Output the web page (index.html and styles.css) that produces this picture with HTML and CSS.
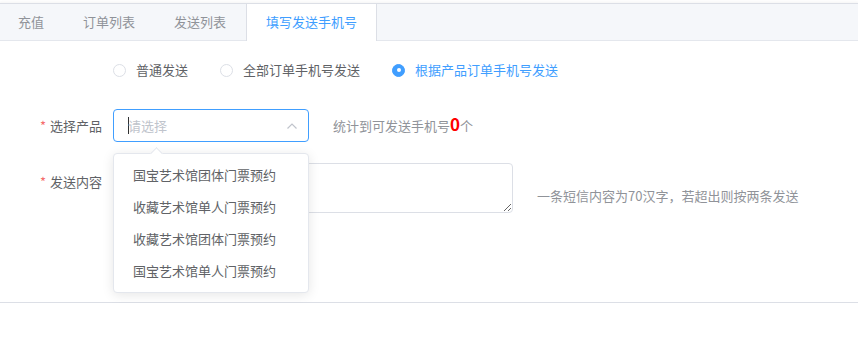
FILE: index.html
```html
<!DOCTYPE html>
<html lang="zh-CN">
<head>
    <meta charset="UTF-8">
    <meta name="viewport" content="width=device-width, initial-scale=1.0">
    <title>填写发送手机号</title>
    <link rel="stylesheet" href="styles.css">
</head>
<body>
    <!-- 卡片式标签页 -->
    <div class="card">
        <div class="tabs-header">
            <div class="tab">充值</div>
            <div class="tab">订单列表</div>
            <div class="tab">发送列表</div>
            <div class="tab active">填写发送手机号</div>
        </div>

        <div class="tabs-content">
            <form class="form">
                <!-- 发送方式 -->
                <div class="form-item radio-item">
                    <div class="form-label"></div>
                    <div class="radio-group">
                        <label class="radio">
                            <span class="radio-circle"></span>
                            <span class="radio-label">普通发送</span>
                        </label>
                        <label class="radio">
                            <span class="radio-circle"></span>
                            <span class="radio-label">全部订单手机号发送</span>
                        </label>
                        <label class="radio checked">
                            <span class="radio-circle"></span>
                            <span class="radio-label">根据产品订单手机号发送</span>
                        </label>
                    </div>
                </div>

                <!-- 选择产品 -->
                <div class="form-item select-item">
                    <div class="form-label"><span class="required">*</span>选择产品</div>
                    <div class="select">
                        <div class="select-input">
                            <span class="caret"></span>
                            <span class="placeholder">请选择</span>
                            <svg class="select-arrow" width="12" height="8" viewBox="0 0 12 8">
                                <polyline points="1.5,6.5 6,2 10.5,6.5" fill="none" stroke="#c0c4cc" stroke-width="1.2"/>
                            </svg>
                        </div>
                        <!-- 下拉菜单 -->
                        <div class="dropdown">
                            <span class="dropdown-arrow"></span>
                            <ul class="dropdown-list">
                                <li>国宝艺术馆团体门票预约</li>
                                <li>收藏艺术馆单人门票预约</li>
                                <li>收藏艺术馆团体门票预约</li>
                                <li>国宝艺术馆单人门票预约</li>
                            </ul>
                        </div>
                    </div>
                    <div class="count-text">统计到可发送手机号<span class="count-num">0</span>个</div>
                </div>

                <!-- 发送内容 -->
                <div class="form-item content-item">
                    <div class="form-label"><span class="required">*</span>发送内容</div>
                    <textarea class="textarea"></textarea>
                    <div class="hint">一条短信内容为70汉字，若超出则按两条发送</div>
                </div>
            </form>
        </div>
    </div>
</body>
</html>
```

FILE: styles.css
```css
body {
    margin: 0;
    background-color: #fff;
    font-family: "Noto Sans CJK SC", "Noto Sans", sans-serif;
    font-size: 13px;
    color: #606266;
}

/* 卡片 */
.card {
    margin: 3px -3px 0 -3px;
    border: 1px solid #dcdfe6;
    background-color: #fff;
    box-shadow: 0 2px 4px 0 rgba(0, 0, 0, 0.12), 0 0 6px 0 rgba(0, 0, 0, 0.04);
}

/* 标签页头部 */
.tabs-header {
    display: flex;
    align-items: flex-start;
    height: 36px;
    background-color: #f5f7fa;
    border-bottom: 1px solid #e4e7ed;
}

.tab {
    height: 37px;
    line-height: 36px;
    padding: 0 19px;
    border-left: 1px solid transparent;
    border-right: 1px solid transparent;
    color: #909399;
    box-sizing: border-box;
}

.tab + .tab {
    margin-left: -1px;
}

.tab.active {
    background-color: #fff;
    color: #409eff;
    border-left-color: #dcdfe6;
    border-right-color: #dcdfe6;
    margin-left: 0;
}

.tabs-content {
    padding: 11px 14px 89px 14px;
}

/* 表单 */
.form-item {
    display: flex;
    align-items: flex-start;
    margin-bottom: 21px;
}

.form-item:last-child {
    margin-bottom: 0;
}

.form-label {
    width: 101px;
    flex-shrink: 0;
    padding-right: 11px;
    box-sizing: border-box;
    text-align: right;
    line-height: 33px;
    color: #606266;
}

.required {
    color: #f56c6c;
    margin-right: 4px;
}

/* 单选框 */
.radio-item {
    height: 36px;
    align-items: center;
}

.radio-group {
    display: flex;
    align-items: center;
}

.radio {
    display: flex;
    align-items: center;
    margin-right: 32px;
    line-height: 20px;
}

.radio-circle {
    width: 13px;
    height: 13px;
    border: 1px solid #dcdfe6;
    border-radius: 50%;
    box-sizing: border-box;
    background-color: #fff;
    display: flex;
    justify-content: center;
    align-items: center;
}

.radio-label {
    padding-left: 10px;
}

.radio.checked .radio-circle {
    background-color: #409eff;
    border-color: #409eff;
}

.radio.checked .radio-circle::after {
    content: "";
    width: 4px;
    height: 4px;
    border-radius: 50%;
    background-color: #fff;
}

.radio.checked .radio-label {
    color: #409eff;
}

/* 下拉选择 */
.select {
    position: relative;
    width: 196px;
}

.select-input {
    display: flex;
    align-items: center;
    height: 33px;
    padding: 0 10px 0 14px;
    border: 1px solid #409eff;
    border-radius: 4px;
    box-sizing: border-box;
}

.caret {
    width: 1px;
    height: 17px;
    background-color: #303133;
    margin-right: -1px;
}

.placeholder {
    flex: 1;
    color: #c0c4cc;
}

.select-arrow {
    display: block;
}

.dropdown {
    position: absolute;
    top: 44px;
    left: 0;
    width: 196px;
    background-color: #fff;
    border: 1px solid #e4e7ed;
    border-radius: 4px;
    box-sizing: border-box;
    box-shadow: 0 2px 12px 0 rgba(0, 0, 0, 0.1);
    z-index: 10;
}

.dropdown-arrow {
    position: absolute;
    top: -5px;
    left: 38px;
    width: 8px;
    height: 8px;
    background-color: #fff;
    border-top: 1px solid #e4e7ed;
    border-left: 1px solid #e4e7ed;
    transform: rotate(45deg);
}

.dropdown-list {
    list-style: none;
    margin: 0;
    padding: 5px 0;
}

.dropdown-list li {
    height: 32px;
    line-height: 32px;
    padding: 0 19px;
    color: #606266;
}

.count-text {
    margin-left: 24px;
    height: 33px;
    line-height: 33px;
    color: #909399;
}

.count-num {
    color: #ff0000;
    font-weight: bold;
    font-size: 17px;
    line-height: 1;
}

/* 文本域 */
.content-item .form-label {
    line-height: 37px;
}

.textarea {
    width: 400px;
    height: 50px;
    padding: 5px 14px;
    border: 1px solid #dcdfe6;
    border-radius: 4px;
    box-sizing: border-box;
    resize: vertical;
    font-family: inherit;
    font-size: 13px;
    color: #606266;
    outline: none;
}

.hint {
    align-self: flex-end;
    margin-left: 24px;
    margin-bottom: 7px;
    line-height: 20px;
    color: #909399;
}
```
